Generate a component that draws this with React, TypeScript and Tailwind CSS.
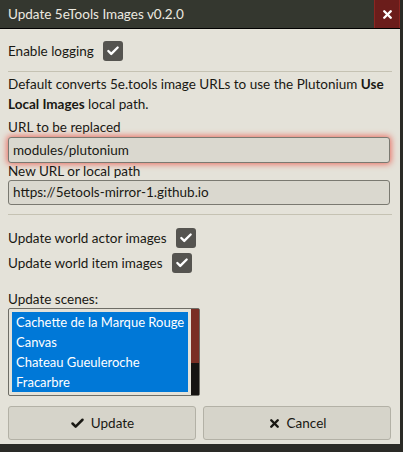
import { Check, X } from "lucide-react";

const scenes = ["Cachette de la Marque Rouge", "Canvas", "Chateau Gueuleroche", "Fracarbre"];

function Checkbox() {
  return (
    <span className="inline-flex w-[20px] h-[20px] rounded-[3px] bg-[#555450] items-center justify-center">
      <Check className="w-[14px] h-[14px] text-white" strokeWidth={4} />
    </span>
  );
}

export default function App() {
  return (
    <div className="w-[403px] h-[452px] bg-[#2a2a26] font-['Lato',sans-serif] text-[13.5px] text-[#191813] overflow-hidden">
      <div className="w-[400px] h-[444px] flex flex-col bg-[#e4e2d9]">
        {/* header */}
        <div className="h-[29px] shrink-0 flex items-center bg-[#34372f] border-b border-black">
          <span className="pl-[8px] text-[#ece9e0] text-[13.5px] flex-1">Update 5eTools Images v0.2.0</span>
          <span className="w-[26px] h-[28px] bg-[#6b1d1b] border-x border-[#8c2521] flex items-center justify-center">
            <X className="w-[13px] h-[13px] text-white" strokeWidth={4.5} />
          </span>
        </div>

        <div className="flex-1 flex flex-col px-[8px]">
          <div className="flex items-center gap-[9px] h-[42px] pt-[2px] shrink-0">
            <span>Enable logging</span>
            <Checkbox />
          </div>
          <hr className="border-t border-[#c5c2b3]" />

          <p className="mt-[2px] leading-[20px]">
            Default converts 5e.tools image URLs to use the Plutonium <b>Use</b> <b>Local Images</b> local path.
          </p>

          <label className="mt-[4px] leading-[18px] block">URL to be replaced</label>
          <div className="mt-[1px] h-[26px] mr-[2px] rounded-[3px] border border-[#7a7971] bg-[#dad8cf] shadow-[0_0_6px_1px_#ea6a5e] flex items-center px-[4px]">
            modules/plutonium
          </div>
          <label className="leading-[17px] block">New URL or local path</label>
          <div className="h-[25px] mr-[2px] rounded-[3px] border border-[#7a7971] bg-[#dad8cf] flex items-center px-[4px]">
            https://5etools-mirror-1.github.io
          </div>
          <hr className="mt-[9px] border-t border-[#c5c2b3]" />

          <div className="mt-[13px] flex flex-col gap-[5px]">
            <div className="flex items-center gap-[9px] h-[20px]">
              <span>Update world actor images</span>
              <Checkbox />
            </div>
            <div className="flex items-center gap-[9px] h-[20px]">
              <span>Update world item images</span>
              <Checkbox />
            </div>
          </div>

          <label className="mt-[17px] leading-[18px] block">Update scenes:</label>
          <div className="w-[192px] h-[88px] shrink-0 border border-[#6e6d66] rounded-[2px] flex p-[3px] pr-0 bg-[#e4e2d9]">
            <div className="flex-1 bg-[#0078d7] text-white flex flex-col pl-[4px] overflow-hidden">
              {scenes.map((s) => (
                <span key={s} className="h-[20px] leading-[20px] whitespace-nowrap text-[13px]">{s}</span>
              ))}
            </div>
            <div className="w-[3px]" />
            <div className="w-[8px] flex flex-col -my-[3px]">
              <div className="h-[54px] bg-[#7a2f25]" />
              <div className="flex-1 bg-[#161412]" />
            </div>
          </div>

          <div className="mt-[10px] flex gap-[7px] pr-[1px]">
            <button className="flex-1 h-[34px] rounded-[3px] border border-[#b3b1a6] bg-[#d6d4ca] flex items-center justify-center gap-[6px]">
              <Check className="w-[15px] h-[15px]" strokeWidth={4} />
              Update
            </button>
            <button className="flex-1 h-[34px] rounded-[3px] border border-[#b3b1a6] bg-[#d6d4ca] flex items-center justify-center gap-[6px]">
              <X className="w-[13px] h-[13px]" strokeWidth={4.5} />
              Cancel
            </button>
          </div>
        </div>
      </div>
    </div>
  );
}
